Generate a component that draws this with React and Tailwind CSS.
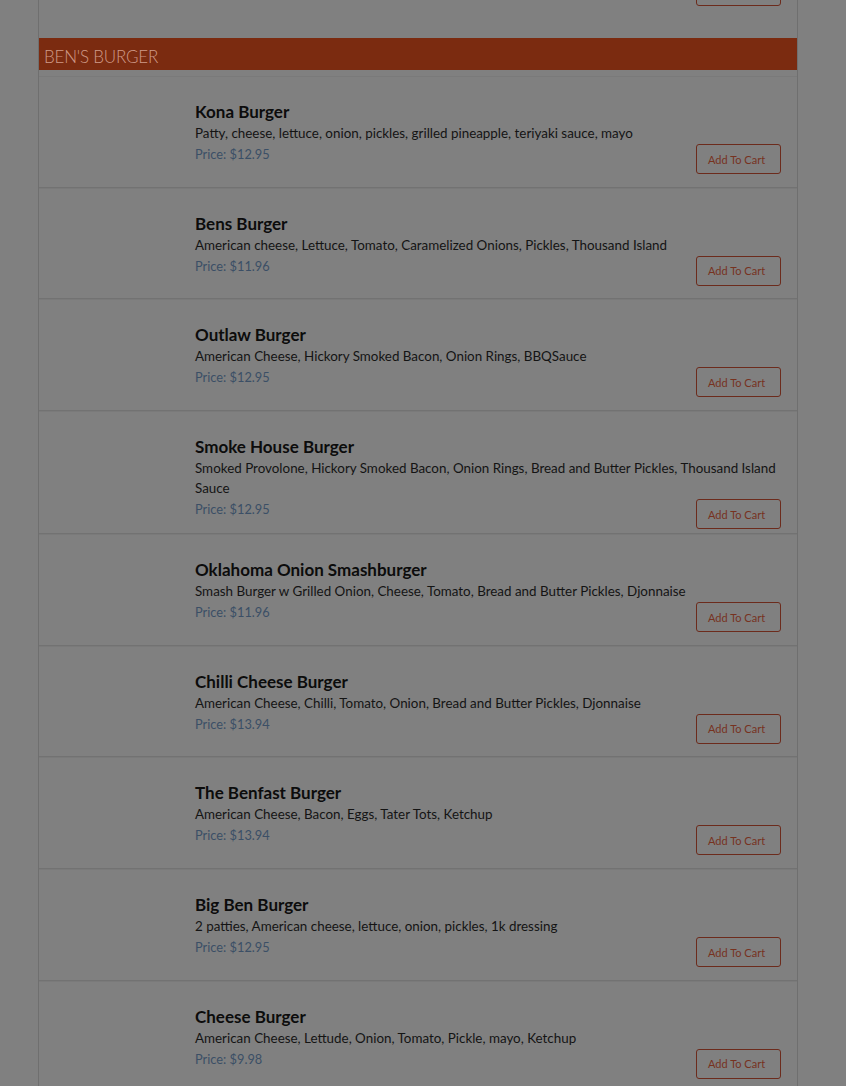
import React from 'react';

const items = [
  { name: 'Kona Burger', desc: 'Patty, cheese, lettuce, onion, pickles, grilled pineapple, teriyaki sauce, mayo', price: '12.95' },
  { name: 'Bens Burger', desc: 'American cheese, Lettuce, Tomato, Caramelized Onions, Pickles, Thousand Island', price: '11.96' },
  { name: 'Outlaw Burger', desc: 'American Cheese, Hickory Smoked Bacon, Onion Rings, BBQSauce', price: '12.95' },
  { name: 'Smoke House Burger', desc: 'Smoked Provolone, Hickory Smoked Bacon, Onion Rings, Bread and Butter Pickles, Thousand Island Sauce', price: '12.95' },
  { name: 'Oklahoma Onion Smashburger', desc: 'Smash Burger w Grilled Onion, Cheese, Tomato, Bread and Butter Pickles, Djonnaise', price: '11.96' },
  { name: 'Chilli Cheese Burger', desc: 'American Cheese, Chilli, Tomato, Onion, Bread and Butter Pickles, Djonnaise', price: '13.94' },
  { name: 'The Benfast Burger', desc: 'American Cheese, Bacon, Eggs, Tater Tots, Ketchup', price: '13.94' },
  { name: 'Big Ben Burger', desc: '2 patties, American cheese, lettuce, onion, pickles, 1k dressing', price: '12.95' },
  { name: 'Cheese Burger', desc: 'American Cheese, Lettude, Onion, Tomato, Pickle, mayo, Ketchup', price: '9.98' },
];

const CartButton = ({ className = '' }) => (
  <button
    className={`w-[85px] h-[30px] shrink-0 border border-[#6c2b1c] rounded-[3px] text-[11px] text-left pl-[11px] text-[#77321f] leading-none ${className}`}
  >
    Add To Cart
  </button>
);

const MenuRow = ({ item, first }) => (
  <div className={`border-b border-[#727272] ${first ? 'pt-[6px]' : ''}`}>
    <div className="border-t border-[#7a7a7a] min-h-[110.7px] pl-[156px] pr-[16px] pt-[24px] pb-[4px]">
      <h3 className="text-[17px] leading-[22px] font-bold text-[#0c0c0c]">{item.name}</h3>
      <p className="text-[13.4px] leading-[20px] text-[#141414] pr-[1px]">{item.desc}</p>
      <div className="flex justify-between items-start">
        <span className="block pt-[1px] text-[12.8px] leading-[20px] text-[#3b4f66]">Price: ${item.price}</span>
        <CartButton className="mt-[1px]" />
      </div>
    </div>
  </div>
);

const App = () => {
  return (
    <div className="min-h-screen bg-[#808080] overflow-hidden" style={{ fontFamily: 'Lato, "Open Sans", sans-serif' }}>
      <div className="ml-[38px] w-[760px] border-x border-[#6f6f6f] bg-[#808080]">
        {/* tail of the previous section */}
        <div className="h-[38px] overflow-hidden">
          <div className="flex justify-end pr-[16px] -mt-[24px]">
            <CartButton />
          </div>
        </div>

        <div className="bg-[#7b2b10] h-[32px] flex items-center pt-[6px] px-[5px]">
          <h2 className="text-[17px] font-light uppercase text-[#cf9a88] tracking-[-0.2px]">Ben's Burger</h2>
        </div>

        {items.map((item, i) => (
          <MenuRow key={item.name} item={item} first={i === 0} />
        ))}
      </div>
    </div>
  );
};

export default App;
